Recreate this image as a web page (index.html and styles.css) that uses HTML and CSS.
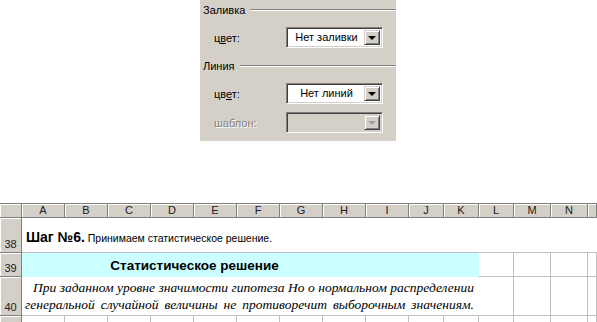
FILE: index.html
```html
<!DOCTYPE html>
<html>
<head>
    <title>Линии и заливка</title>
    <link rel="stylesheet" href="styles.css">
</head>
<body>
    <div class="dialog">
        <div class="group-title">Заливка</div>
        <div class="field first">
            <span class="label">ц<u>в</u>ет:</span>
            <div class="combo"><span class="combo-text">Нет заливки</span><span class="combo-btn"><i class="arrow"></i></span></div>
        </div>
        <div class="group-title second">Линия</div>
        <div class="field line-color">
            <span class="label">цв<u>е</u>т:</span>
            <div class="combo"><span class="combo-text">Нет линий</span><span class="combo-btn"><i class="arrow"></i></span></div>
        </div>
        <div class="field pattern">
            <span class="label disabled">шаблон:</span>
            <div class="combo off"><span class="combo-text"></span><span class="combo-btn"><i class="arrow"></i></span></div>
        </div>
    </div>

    <div class="sheet">
        <div class="corner"></div>
        <div class="col-head">A</div>
        <div class="col-head">B</div>
        <div class="col-head">C</div>
        <div class="col-head">D</div>
        <div class="col-head">E</div>
        <div class="col-head">F</div>
        <div class="col-head">G</div>
        <div class="col-head">H</div>
        <div class="col-head">I</div>
        <div class="col-head">J</div>
        <div class="col-head">K</div>
        <div class="col-head">L</div>
        <div class="col-head">M</div>
        <div class="col-head">N</div>
        <div class="col-head"></div>

        <div class="row-head">38</div>
        <div class="cell step"><b>Шаг №6.</b> <span class="step-text">Принимаем статистическое решение.</span></div>

        <div class="row-head">39</div>
        <div class="cell decision"><span class="decision-title">Статистическое решение</span></div>
        <div class="cell"></div>
        <div class="cell"></div>
        <div class="cell"></div>
        <div class="cell"></div>

        <div class="row-head">40</div>
        <div class="cell conclusion">
            <p class="first-line">При заданном уровне значимости гипотеза Но о нормальном распределении</p>
            <p>генеральной случайной величины не противоречит выборочным значениям.</p>
        </div>
        <div class="cell"></div>
        <div class="cell"></div>
        <div class="cell"></div>
        <div class="cell"></div>

        <div class="row-head"></div>
        <div class="cell"></div>
        <div class="cell"></div>
        <div class="cell"></div>
        <div class="cell"></div>
        <div class="cell"></div>
        <div class="cell"></div>
        <div class="cell"></div>
        <div class="cell"></div>
        <div class="cell"></div>
        <div class="cell"></div>
        <div class="cell"></div>
        <div class="cell"></div>
        <div class="cell"></div>
        <div class="cell"></div>
        <div class="cell"></div>
    </div>
</body>
</html>
```

FILE: styles.css
```css
body {
    margin: 0;
    height: 322px;
    overflow: hidden;
    background-color: white;
    font-family: "Liberation Sans", Arial, sans-serif;
}
.dialog {
    margin-left: 200px;
    width: 196px;
    height: 141px;
    padding: 3px 0 0 3px;
    box-sizing: border-box;
    background-color: #d4d0c8;
    font-size: 11px;
    color: #000;
}
.group-title {
    display: flex;
    align-items: center;
    gap: 5px;
    height: 13px;
}
.group-title::after {
    content: "";
    flex: 1;
    border-top: 1px solid #808080;
    border-bottom: 1px solid #fff;
}
.group-title.second {
    margin-top: 11px;
}
.field {
    display: flex;
    align-items: center;
    padding-left: 11px;
    height: 21px;
}
.field.first {
    margin-top: 11px;
}
.field.line-color {
    margin-top: 11px;
}
.field.pattern {
    margin-top: 8px;
}
.label {
    width: 72px;
}
.label u {
    text-decoration-thickness: 1px;
    text-underline-offset: 1px;
}
.label.disabled {
    color: #808080;
    text-shadow: 1px 1px 0 #fff;
}
.combo {
    display: flex;
    width: 97px;
    height: 21px;
    box-sizing: border-box;
    border: 1px solid;
    border-color: #808080 #fff #fff #808080;
    box-shadow: inset 1px 1px 0 #404040, inset -1px -1px 0 #d4d0c8;
    background-color: #fff;
    padding: 2px;
}
.combo.off {
    background-color: #d4d0c8;
}
.combo-text {
    flex: 1;
    text-align: center;
    line-height: 15px;
    font-size: 11px;
}
.combo-btn {
    width: 16px;
    display: flex;
    align-items: center;
    justify-content: center;
    box-sizing: border-box;
    background-color: #d4d0c8;
    border: 1px solid;
    border-color: #d4d0c8 #404040 #404040 #d4d0c8;
    box-shadow: inset 1px 1px 0 #fff, inset -1px -1px 0 #808080;
}
.arrow {
    width: 0;
    height: 0;
    border-left: 4px solid transparent;
    border-right: 4px solid transparent;
    border-top: 4px solid #000;
    margin-top: 1px;
}
.combo.off .arrow {
    border-top-color: #a0a0a0;
}
.sheet {
    margin-top: 62px;
    display: grid;
    grid-template-columns: 22px repeat(9, 43px) 35px 35px 35px 37px 37px 1fr;
    grid-template-rows: 15px 35px 24px 39px 20px;
    font-size: 11px;
}
.corner,
.col-head,
.row-head {
    background-color: #d4d0c8;
    box-sizing: border-box;
    border-right: 1px solid #808080;
    border-bottom: 1px solid #808080;
    box-shadow: inset 1px 1px 0 #fff;
}
.corner,
.col-head {
    border-top: 1px solid #808080;
}
.col-head {
    text-align: center;
    line-height: 13px;
    color: #202020;
}
.row-head {
    display: flex;
    align-items: flex-end;
    justify-content: center;
    padding-bottom: 2px;
    line-height: 11px;
    color: #202020;
}
.cell {
    box-sizing: border-box;
    border-right: 1px solid #c0c0c0;
    border-bottom: 1px solid #c0c0c0;
}
.step {
    grid-column: 2 / -1;
    border-right: none;
    padding: 11px 0 0 4px;
    font-size: 10.5px;
    line-height: 16px;
}
.step b {
    font-size: 14px;
}
.decision {
    grid-column: 2 / 13;
    background-color: #ccffff;
    border-right: none;
    border-bottom: none;
    display: flex;
    align-items: center;
}
.decision-title {
    width: 345px;
    text-align: center;
    font-size: 13.5px;
    font-weight: bold;
}
.conclusion {
    grid-column: 2 / 13;
    border-right: none;
    display: flex;
    flex-direction: column;
    justify-content: flex-end;
    padding: 0 5px 2px 3px;
}
.conclusion p {
    margin: 0;
    font-family: "Liberation Serif", "Times New Roman", serif;
    font-style: italic;
    font-size: 13.5px;
    line-height: 17px;
    white-space: nowrap;
    text-align: justify;
    text-align-last: justify;
}
.conclusion .first-line {
    padding-left: 8px;
}
```
